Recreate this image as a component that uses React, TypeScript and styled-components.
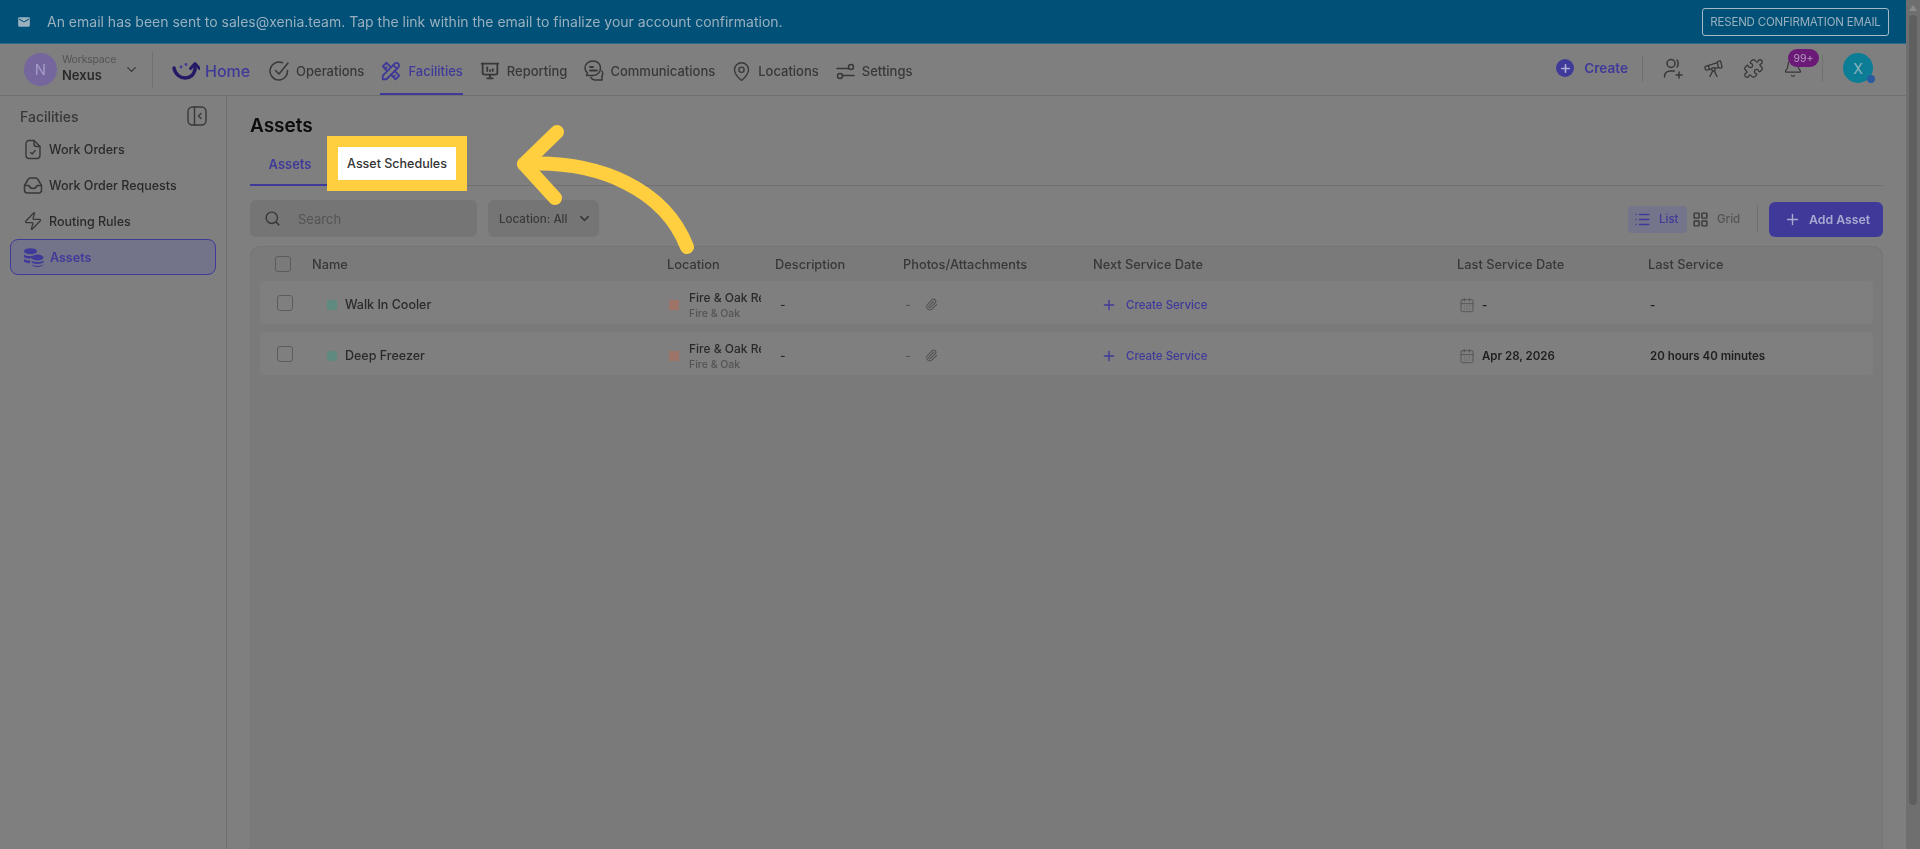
import React from "react";
import styled, { createGlobalStyle } from "styled-components";
import {
  Bell,
  CalendarDays,
  ChevronDown,
  LayoutGrid,
  List,
  MapPin,
  Paperclip,
  Plus,
  Puzzle,
  Search,
  Telescope,
  Zap,
} from "lucide-react";
import { MdEmail } from "react-icons/md";
import { TbPresentationAnalytics, TbTools } from "react-icons/tb";

const ink = "#2a2a2a";
const mid = "#383838";
const soft = "#545454";
const line = "#707070";
const purple = "#3f3a9a";

const GlobalStyle = createGlobalStyle`
  html, body, #root {
    margin: 0;
    height: 100%;
    overflow: hidden;
  }
  body {
    background: #7f7f7f;
    font-family: Inter, "Liberation Sans", sans-serif;
    color: ${ink};
  }
  * {
    box-sizing: border-box;
  }
`;

const Screen = styled.div`
  position: relative;
  display: flex;
  height: 849px;
  overflow: hidden;
  filter: blur(0.6px);
`;

const Page = styled.div`
  flex: 1;
  min-width: 0;
  display: flex;
  flex-direction: column;
`;

const Scrollbar = styled.div`
  width: 14px;
  background: #6f6f6f;
  display: flex;
  flex-direction: column;
  align-items: center;
  padding-top: 5px;
  gap: 4px;
`;

const ScrollArrow = styled.div`
  width: 0;
  height: 0;
  border-left: 4px solid transparent;
  border-right: 4px solid transparent;
  border-bottom: 6px solid #8c8c8c;
`;

const ScrollThumb = styled.div`
  width: 8px;
  height: 790px;
  border-radius: 4px;
  background: #5f5f5f;
`;

const Banner = styled.div`
  height: 44px;
  flex: none;
  background: #005078;
  border-bottom: 1px solid #2a6a8c;
  display: flex;
  align-items: center;
  padding: 0 17px;
  color: #9ab0be;
`;

const BannerText = styled.span`
  margin-left: 16px;
  font-size: 14px;
  flex: 1;
  white-space: nowrap;
`;

const ResendButton = styled.div`
  width: 187px;
  height: 28px;
  border: 1px solid #a6bac6;
  border-radius: 3px;
  display: flex;
  align-items: center;
  justify-content: center;
  font-size: 11.5px;
  font-weight: 400;
  white-space: nowrap;
  letter-spacing: -0.2px;
`;

const Nav = styled.div`
  height: 52px;
  flex: none;
  border-bottom: 1px solid ${line};
  display: flex;
  align-items: center;
  padding: 0 33px 0 24px;
`;

const Workspace = styled.div`
  display: flex;
  align-items: center;
  width: 129px;
  height: 36px;
  border-right: 1px solid ${line};
  flex: none;
`;

const WorkspaceAvatar = styled.div`
  width: 33px;
  height: 33px;
  border-radius: 50%;
  background: #75679e;
  color: #a79bc6;
  display: flex;
  align-items: center;
  justify-content: center;
  font-size: 15px;
  flex: none;
`;

const WorkspaceText = styled.div`
  margin-left: 5px;
  width: 62px;
  display: flex;
  flex-direction: column;
  gap: 2px;
  margin-top: -2px;
`;

const WorkspaceLabel = styled.span`
  font-size: 10.5px;
  color: ${soft};
  line-height: 12px;
  letter-spacing: -0.2px;
`;

const WorkspaceName = styled.span`
  font-size: 13px;
  font-weight: 600;
  line-height: 15px;
  color: ${ink};
`;

const HomeLink = styled.div`
  margin-left: 19px;
  width: 97px;
  display: flex;
  align-items: center;
  gap: 5px;
  color: ${purple};
  font-size: 16px;
  font-weight: 500;
  padding-top: 2px;
  flex: none;
`;

const NavLinks = styled.div`
  display: flex;
  align-self: stretch;
  gap: 16px;
  flex: 1;
`;

const NavLink = styled.div<{ $active?: boolean }>`
  display: flex;
  align-items: center;
  gap: 6px;
  font-size: 13px;
  font-weight: 500;
  color: ${(p) => (p.$active ? purple : mid)};
  border-bottom: 2px solid ${(p) => (p.$active ? purple : "transparent")};
  padding-top: 5px;
  svg {
    flex: none;
  }
`;

const NavRight = styled.div`
  display: flex;
  align-items: center;
  margin-top: -3px;
`;

const CreateLink = styled.div`
  display: flex;
  align-items: center;
  gap: 10px;
  color: ${purple};
  font-size: 13.6px;
  font-weight: 600;
  margin-right: 14px;
`;

const CreateDot = styled.div`
  width: 18px;
  height: 18px;
  border-radius: 50%;
  background: ${purple};
  color: #b0b0d8;
  display: flex;
  align-items: center;
  justify-content: center;
`;

const NavDivider = styled.div`
  width: 1px;
  height: 27px;
  background: ${line};
`;

const IconRow = styled.div`
  display: flex;
  align-items: center;
  gap: 19px;
  padding: 0 19px 0 20px;
  color: ${mid};
`;

const BellWrap = styled.div`
  position: relative;
  display: flex;
`;

const Badge = styled.div`
  position: absolute;
  left: 5px;
  top: -9px;
  width: 31px;
  height: 18px;
  border-radius: 9px;
  background: #6b1a78;
  color: #b89cc0;
  font-size: 10.5px;
  display: flex;
  align-items: center;
  justify-content: center;
`;

const UserAvatar = styled.div`
  position: relative;
  width: 30px;
  height: 30px;
  margin-left: 20px;
  border-radius: 50%;
  background: #0b7d95;
  color: #8fb4bf;
  font-size: 14px;
  display: flex;
  align-items: center;
  justify-content: center;
`;

const StatusDot = styled.div`
  position: absolute;
  right: -2px;
  bottom: 0;
  width: 8px;
  height: 8px;
  border-radius: 50%;
  background: #2a5aa0;
`;

const Body = styled.div`
  flex: 1;
  min-height: 0;
  display: flex;
`;

const Sidebar = styled.div`
  width: 227px;
  flex: none;
  border-right: 1px solid ${line};
  padding: 7px 10px 0;
`;

const SideHead = styled.div`
  height: 26px;
  padding: 0 9px 0 10px;
  display: flex;
  align-items: center;
  justify-content: space-between;
  font-size: 14px;
  font-weight: 500;
  color: ${mid};
  margin-bottom: 2px;
`;

const SideItem = styled.div<{ $active?: boolean }>`
  height: 36px;
  display: flex;
  align-items: center;
  gap: 6px;
  padding-left: 12px;
  font-size: 12.5px;
  font-weight: ${(p) => (p.$active ? 600 : 500)};
  color: ${(p) => (p.$active ? purple : ink)};
  border: 1px solid ${(p) => (p.$active ? purple : "transparent")};
  border-radius: 8px;
  background: ${(p) => (p.$active ? "#737389" : "transparent")};
  svg {
    flex: none;
    color: ${(p) => (p.$active ? purple : mid)};
  }
`;

const Main = styled.div`
  flex: 1;
  min-width: 0;
  display: flex;
  flex-direction: column;
  padding: 16px 23px 0 23px;
`;

const Title = styled.h1`
  margin: 0;
  font-size: 19px;
  line-height: 28px;
  font-weight: 600;
  color: #0c0c0c;
`;

const Tabs = styled.div`
  height: 46px;
  flex: none;
  display: flex;
  align-items: flex-end;
  border-bottom: 1px solid ${line};
`;

const Tab = styled.div<{ $active?: boolean }>`
  width: 80px;
  height: 43px;
  display: flex;
  align-items: center;
  justify-content: center;
  margin-bottom: -1px;
  font-size: 13px;
  font-weight: 600;
  color: ${purple};
  border-bottom: 2px solid ${purple};
`;

const SpotTab = styled.div`
  margin: 0 0 5px 8px;
  height: 33px;
  width: 118px;
  display: flex;
  align-items: center;
  justify-content: center;
  background: #fff;
  outline: 11px solid #ffcf3f;
  font-size: 12.5px;
  font-weight: 500;
  color: #333;
  white-space: nowrap;
  position: relative;
  z-index: 3;
`;

const Toolbar = styled.div`
  height: 37px;
  margin-top: 14px;
  flex: none;
  display: flex;
  align-items: center;
`;

const SearchBox = styled.div`
  width: 227px;
  height: 37px;
  border-radius: 6px;
  background: #757575;
  display: flex;
  align-items: center;
  gap: 17px;
  padding-left: 14px;
  color: ${soft};
  font-size: 13px;
  margin-right: 11px;
  svg {
    color: ${mid};
  }
`;

const Select = styled.div`
  width: 111px;
  height: 37px;
  border-radius: 6px;
  background: #757575;
  display: flex;
  align-items: center;
  gap: 10px;
  padding-left: 11px;
  color: ${mid};
  font-size: 11.6px;
  font-weight: 500;
  white-space: nowrap;
`;

const ToolbarRight = styled.div`
  margin-left: auto;
  display: flex;
  align-items: center;
  padding-top: 1px;
`;

const ViewButton = styled.div<{ $active?: boolean }>`
  height: 27px;
  width: ${(p) => (p.$active ? 59 : 61)}px;
  border-radius: 4px;
  display: flex;
  align-items: center;
  gap: 8px;
  padding-left: ${(p) => (p.$active ? 6 : 5)}px;
  font-size: 11.5px;
  font-weight: 500;
  background: ${(p) => (p.$active ? "#74748a" : "transparent")};
  color: ${(p) => (p.$active ? purple : soft)};
  svg {
    color: ${(p) => (p.$active ? purple : mid)};
  }
`;

const ToolbarDivider = styled.div`
  width: 1px;
  height: 28px;
  background: ${line};
  margin: 0 11px 0 9px;
`;

const AddButton = styled.div`
  width: 114px;
  height: 35px;
  border-radius: 6px;
  background: ${purple};
  color: #aaa9d0;
  display: flex;
  align-items: center;
  gap: 8px;
  padding-left: 15px;
  font-size: 12.3px;
  font-weight: 600;
  white-space: nowrap;
`;

const Table = styled.div`
  margin-top: 9px;
  flex: 1;
  border: 1px solid #757575;
  border-bottom: none;
  border-radius: 10px 10px 0 0;
  background: #7a7a7a;
  padding: 0 9px;
`;

const columns = "52px 355px 108px 128px 190px 364px 191px 1fr";

const HeadRow = styled.div`
  height: 34px;
  display: grid;
  grid-template-columns: ${columns};
  align-items: center;
  font-size: 12.8px;
  font-weight: 500;
  color: ${mid};
`;

const Row = styled.div`
  height: 43px;
  margin-bottom: 8px;
  padding-top: 4px;
  display: grid;
  grid-template-columns: ${columns};
  align-items: center;
  background: #7f7f7f;
  border-radius: 4px;
  font-size: 12px;
  font-weight: 500;
  color: ${ink};
`;

const Check = styled.div<{ $head?: boolean }>`
  width: 16px;
  height: 16px;
  margin-left: ${(p) => (p.$head ? 15 : 17)}px;
  margin-top: ${(p) => (p.$head ? 0 : -3)}px;
  border: 1.5px solid #5c5c5c;
  border-radius: 3px;
`;

const NameCell = styled.div`
  display: flex;
  align-items: center;
  gap: 8px;
  padding-left: 15px;
  font-size: 12.5px;
`;

const Swatch = styled.div<{ $color: string }>`
  width: 10px;
  height: 10px;
  background: ${(p) => p.$color};
  flex: none;
`;

const LocationCell = styled.div`
  display: flex;
  align-items: center;
  gap: 10px;
  padding-left: 2px;
  overflow: hidden;
`;

const LocationText = styled.div`
  width: 72px;
  overflow: hidden;
  white-space: nowrap;
  display: flex;
  flex-direction: column;
  gap: 1px;
`;

const LocationName = styled.span`
  font-size: 12px;
  line-height: 16px;
`;

const LocationSub = styled.span`
  font-size: 10.5px;
  line-height: 13px;
  color: ${soft};
`;

const Dash = styled.div`
  padding-left: 5px;
`;

const AttachCell = styled.div`
  display: flex;
  align-items: center;
  gap: 14px;
  padding-left: 2px;
  color: ${soft};
`;

const ServiceLink = styled.div`
  display: flex;
  align-items: center;
  gap: 9px;
  padding-left: 8px;
  color: ${purple};
  font-size: 11.5px;
`;

const DateCell = styled.div`
  display: flex;
  align-items: center;
  gap: 7px;
  padding-left: 2px;
  font-weight: 600;
  font-size: 11.5px;
  color: #1f1f1f;
  svg {
    color: ${soft};
  }
`;

const LastCell = styled.div`
  padding-left: 2px;
  font-weight: 600;
  font-size: 11.5px;
  color: #1f1f1f;
  white-space: nowrap;
`;

const ArrowLayer = styled.svg`
  position: absolute;
  left: 0;
  top: 0;
  width: 1920px;
  height: 849px;
  pointer-events: none;
  z-index: 4;
`;

const HomeLogo = () => (
  <svg width="28" height="20" viewBox="0 0 28 20" fill="none">
    <path d="M2 7c1 6 6 10 11 10s9-3 10-9" stroke="#241a66" strokeWidth="3.4" strokeLinecap="round" />
    <path d="M23 10V4M18.5 7.5 23 2.5l4.5 5" stroke="#241a66" strokeWidth="2.8" strokeLinecap="round" strokeLinejoin="round" />
    <circle cx="9" cy="6" r="1.4" fill={purple} />
    <circle cx="14" cy="3.5" r="1.4" fill={purple} />
  </svg>
);

const OperationsIcon = () => (
  <svg width="21" height="22" viewBox="0 0 21 22" fill="none" stroke="currentColor" strokeWidth="1.5" strokeLinecap="round" strokeLinejoin="round">
    <path d="M18.500 10.500c.3 5-3.500 9.500-8.500 9.500a9 9 0 1 1 3.500-17.300" />
    <path d="M6.500 10.500 10 14l9-11" />
  </svg>
);

const CommsIcon = () => (
  <svg width="21" height="24" viewBox="0 0 21 24" fill="none" stroke="currentColor" strokeWidth="1.5" strokeLinecap="round" strokeLinejoin="round">
    <path d="M10 2c4.500 0 7.500 3 7.500 7s-3 7.500-7.500 7.500H3.500l1-2.500C2.800 12.700 2 11 2 9c0-4 3.500-7 8-7Z" />
    <path d="M7 8h3M7 11.500h7" strokeWidth="1.800" />
    <path d="M19 12c1 2 .8 4-.2 5.500l.4 3.500h-7c-2 0-3.500-1-4.200-2.500" />
  </svg>
);

const SettingsIcon = () => (
  <svg width="21" height="19" viewBox="0 0 19 19" fill="none" stroke="currentColor" strokeWidth="1.500" strokeLinecap="round">
    <path d="M1 6.500h11.500M6.500 13.500H18" />
    <circle cx="15" cy="5" r="2.500" />
    <circle cx="4" cy="14" r="2.500" />
  </svg>
);

const InviteIcon = () => (
  <svg width="21" height="21" viewBox="0 0 21 21" fill="none" stroke="currentColor" strokeWidth="1.500" strokeLinecap="round">
    <ellipse cx="8" cy="5.500" rx="4" ry="4" />
    <path d="M14 2c1.500 1 1.500 6 0 7" />
    <path d="M1.500 19c0-4 2.500-6 6-6h4" />
    <path d="M16 14v6M13 17h6" />
  </svg>
);

const WorkOrderIcon = () => (
  <svg width="20" height="21" viewBox="0 0 20 21" fill="none" stroke="currentColor" strokeWidth="1.400" strokeLinecap="round" strokeLinejoin="round">
    <path d="M11 1.500H6a3 3 0 0 0-3 3v12a3 3 0 0 0 3 3h8a3 3 0 0 0 3-3V7.500Z" />
    <path d="M11 1.500v3.500a2.500 2.500 0 0 0 2.500 2.500H17" />
    <path d="M7.500 13.500 9.200 15l3-3.500" />
  </svg>
);

const InboxIcon = () => (
  <svg width="20" height="17" viewBox="0 0 19 17" fill="none" stroke="currentColor" strokeWidth="1.500" strokeLinejoin="round">
    <path d="M1 8.500 4.500 2.500C5 1.500 6 1 7 1h5c1 0 2 .5 2.500 1.500L18 8.500v4.500c0 1.700-1.300 3-3 3H4c-1.700 0-3-1.300-3-3Z" />
    <path d="M1 8.500h4.500c.5 2 2 3 4 3s3.500-1 4-3H18" />
  </svg>
);

const CollapseIcon = () => (
  <svg width="20" height="20" viewBox="0 0 20 20" fill="none" stroke="currentColor" strokeWidth="1.400" strokeLinecap="round" strokeLinejoin="round">
    <rect x="1" y="1" width="18" height="18" rx="4.500" />
    <path d="M7.500 1v18" />
    <path d="M14 7.500 11.500 10l2.500 2.500" />
  </svg>
);

const CoinsIcon = () => (
  <svg width="21" height="19" viewBox="0 0 21 19" fill="currentColor">
    <ellipse cx="7.500" cy="3.200" rx="6.500" ry="3" />
    <path d="M1 6.500c2 1.600 6 2 9 1.200L8 10.400c-3 .2-5.800-.4-7-1.500Z" />
    <path d="M1 11c1.300 1 3.500 1.500 6 1.500v2.700c-2.500 0-4.700-.6-6-1.700Z" />
    <ellipse cx="14.500" cy="9.500" rx="6" ry="3" />
    <path d="M8.500 12.500c1.300 1 3.500 1.600 6 1.600s4.700-.6 6-1.600v1.800c-1.300 1.100-3.500 1.700-6 1.700s-4.700-.6-6-1.700Z" />
    <path d="M8.500 16.200c1.300 1 3.500 1.500 6 1.500s4.700-.5 6-1.500c-.5 1.700-3 2.800-6 2.800s-5.500-1.100-6-2.800Z" />
  </svg>
);

const rows = [
  { name: "Walk In Cooler", date: "-", last: "-" },
  { name: "Deep Freezer", date: "Apr 28, 2026", last: "20 hours 40 minutes" },
];

export default function App() {
  return (
    <>
      <GlobalStyle />
      <Screen>
        <Page>
          <Banner>
            <MdEmail size={14} />
            <BannerText>
              An email has been sent to sales@xenia.team. Tap the link within the email to finalize your account confirmation.
            </BannerText>
            <ResendButton>RESEND CONFIRMATION EMAIL</ResendButton>
          </Banner>
          <Nav>
            <Workspace>
              <WorkspaceAvatar>N</WorkspaceAvatar>
              <WorkspaceText>
                <WorkspaceLabel>Workspace</WorkspaceLabel>
                <WorkspaceName>Nexus</WorkspaceName>
              </WorkspaceText>
              <ChevronDown size={15} color={mid} />
            </Workspace>
            <HomeLink>
              <HomeLogo />
              Home
            </HomeLink>
            <NavLinks>
              <NavLink>
                <OperationsIcon />
                Operations
              </NavLink>
              <NavLink $active>
                <TbTools size={22} />
                Facilities
              </NavLink>
              <NavLink>
                <TbPresentationAnalytics size={22} />
                Reporting
              </NavLink>
              <NavLink>
                <CommsIcon />
                Communications
              </NavLink>
              <NavLink>
                <MapPin size={21} strokeWidth={1.5} />
                Locations
              </NavLink>
              <NavLink>
                <SettingsIcon />
                Settings
              </NavLink>
            </NavLinks>
            <NavRight>
              <CreateLink>
                <CreateDot>
                  <Plus size={13} strokeWidth={3} />
                </CreateDot>
                Create
              </CreateLink>
              <NavDivider />
              <IconRow>
                <InviteIcon />
                <Telescope size={21} strokeWidth={1.5} />
                <Puzzle size={21} strokeWidth={1.5} />
                <BellWrap>
                  <Bell size={20} strokeWidth={1.5} />
                  <Badge>99+</Badge>
                </BellWrap>
              </IconRow>
              <NavDivider />
              <UserAvatar>
                X
                <StatusDot />
              </UserAvatar>
            </NavRight>
          </Nav>
          <Body>
            <Sidebar>
              <SideHead>
                Facilities
                <CollapseIcon />
              </SideHead>
              <SideItem>
                <WorkOrderIcon />
                Work Orders
              </SideItem>
              <SideItem>
                <InboxIcon />
                Work Order Requests
              </SideItem>
              <SideItem>
                <Zap size={20} strokeWidth={1.5} />
                Routing Rules
              </SideItem>
              <SideItem $active>
                <CoinsIcon />
                Assets
              </SideItem>
            </Sidebar>
            <Main>
              <Title>Assets</Title>
              <Tabs>
                <Tab>Assets</Tab>
                <SpotTab>Asset Schedules</SpotTab>
              </Tabs>
              <Toolbar>
                <SearchBox>
                  <Search size={17} />
                  Search
                </SearchBox>
                <Select>
                  Location: All
                  <ChevronDown size={15} strokeWidth={2.5} />
                </Select>
                <ToolbarRight>
                  <ViewButton $active>
                    <List size={17} />
                    List
                  </ViewButton>
                  <ViewButton>
                    <LayoutGrid size={17} />
                    Grid
                  </ViewButton>
                  <ToolbarDivider />
                  <AddButton>
                    <Plus size={17} />
                    Add Asset
                  </AddButton>
                </ToolbarRight>
              </Toolbar>
              <Table>
                <HeadRow>
                  <Check $head />
                  <div>Name</div>
                  <div>Location</div>
                  <div>Description</div>
                  <div>Photos/Attachments</div>
                  <div>Next Service Date</div>
                  <div>Last Service Date</div>
                  <div>Last Service</div>
                </HeadRow>
                {rows.map((row) => (
                  <Row key={row.name}>
                    <Check />
                    <NameCell>
                      <Swatch $color="#5f8a80" />
                      {row.name}
                    </NameCell>
                    <LocationCell>
                      <Swatch $color="#9e7468" />
                      <LocationText>
                        <LocationName>Fire &amp; Oak Re</LocationName>
                        <LocationSub>Fire &amp; Oak</LocationSub>
                      </LocationText>
                    </LocationCell>
                    <Dash>-</Dash>
                    <AttachCell>
                      -
                      <Paperclip size={13} />
                    </AttachCell>
                    <ServiceLink>
                      <Plus size={16} />
                      Create Service
                    </ServiceLink>
                    <DateCell>
                      <CalendarDays size={16} strokeWidth={1.4} />
                      {row.date}
                    </DateCell>
                    <LastCell>{row.last}</LastCell>
                  </Row>
                ))}
              </Table>
            </Main>
          </Body>
        </Page>
        <Scrollbar>
          <ScrollArrow />
          <ScrollThumb />
        </Scrollbar>
        <ArrowLayer viewBox="0 0 1920 849" fill="none" stroke="#ffcf3f" strokeWidth="14" strokeLinecap="round" strokeLinejoin="round">
          <path d="M524 164C600 160 665 190 687 247" />
          <path d="M557 132 524 164 555 198" />
        </ArrowLayer>
      </Screen>
    </>
  );
}
